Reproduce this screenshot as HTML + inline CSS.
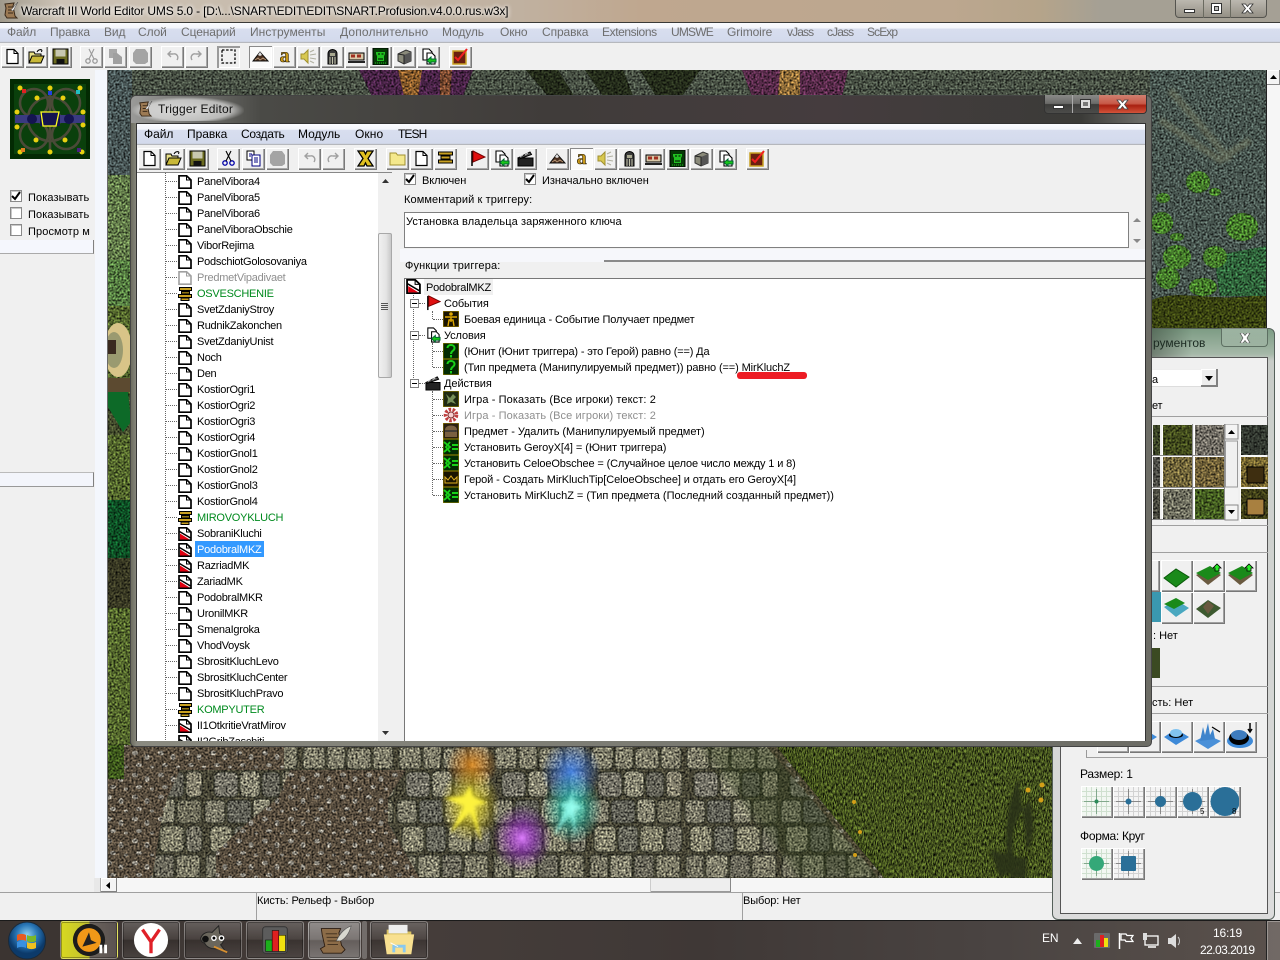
<!DOCTYPE html>
<html lang="ru"><head><meta charset="utf-8"><title>Warcraft III World Editor</title>
<style>
*{box-sizing:border-box}
html,body{margin:0;padding:0;width:1280px;height:960px;overflow:hidden;background:#f0f0f0}
body{position:relative;font:11px/16px "Liberation Sans",sans-serif;letter-spacing:-.2px;color:#000}
.a,.t,.b{position:absolute}
.t{white-space:nowrap;height:16px}
.g{color:#6e6e6e}
.b{width:23px;height:22px;background:#f0f0f0;box-shadow:inset 1px 1px #fff,inset -1px -1px #7a7a7a,inset -2px -2px #a8a8a8}
.b svg{position:absolute;left:3px;top:2px;width:17px;height:17px}
.b.p{background:#fbfbfb;box-shadow:inset 1px 1px #8a8a8a,inset -1px -1px #fff}
.menu{background:linear-gradient(#fbfcff 0,#f3f5fb 25%,#d8deef 30%,#d3daec 92%,#a8a8a8 100%)}
.r{position:relative;height:16px;white-space:nowrap;letter-spacing:-.25px}
.r svg{position:absolute;width:14px;height:14px;top:2px;left:41px}
.r span{position:absolute;left:60px;top:0;height:16px;line-height:18px}
.r:before{content:"";position:absolute;left:29px;width:11px;top:8px;border-top:1px dotted #666}
.gr{color:#008a1e}.dis{color:#8e8e8e}
.sel{background:#3399ff;color:#fff;padding:0 2px;left:58px!important}
.q{position:relative;height:16px;white-space:nowrap}
.q svg{position:absolute;width:16px;height:16px;top:0}
.q span{position:absolute;top:0;height:16px;line-height:18px}
.box{position:absolute;left:6px;top:4px;width:9px;height:9px;border:1px solid #808080;background:#fff}
.box:after{content:"";position:absolute;left:1px;top:3px;width:5px;height:1px;background:#000}
.dl{position:absolute;border-left:1px dotted #666}
.dh{position:absolute;border-top:1px dotted #666}
.cb{position:absolute;width:12px;height:12px;background:#fff;border:1px solid #8a8a8a;box-shadow:inset 1px 1px #c8c8c8}
.pb{position:absolute;width:32px;height:32px;background:#f0f0f0;box-shadow:inset 1px 1px #fff,inset -1px -1px #777,inset -2px -2px #a0a0a0}
.pb svg{position:absolute;left:1px;top:1px;width:29px;height:29px}
.tb{position:absolute;top:921px;height:38px;border-radius:3px;border:1px solid rgba(255,255,255,.28);box-shadow:inset 0 0 0 1px rgba(0,0,0,.3);background:linear-gradient(rgba(255,255,255,.2),rgba(255,255,255,.05) 48%,rgba(0,0,0,.12) 50%,rgba(255,255,255,.06))}
.tb svg{position:absolute;left:0;top:0;width:100%;height:100%}
</style></head><body>

<svg width="0" height="0" style="position:absolute">
<defs>
<filter id="n" x="0" y="0" width="100%" height="100%" color-interpolation-filters="sRGB"><feTurbulence type="fractalNoise" baseFrequency=".5" numOctaves="2" seed="4"/><feColorMatrix type="matrix" values="1.4 0 0 0 -.2 1.4 0 0 0 -.2 1.4 0 0 0 -.2 0 0 0 0 1" result="g"/><feComposite in="SourceGraphic" in2="g" operator="arithmetic" k1="1.9" k2="0" k3="0" k4="0"/></filter>
<filter id="n2" x="0" y="0" width="100%" height="100%" color-interpolation-filters="sRGB"><feTurbulence type="fractalNoise" baseFrequency=".9 .3" numOctaves="2" seed="9"/><feColorMatrix type="matrix" values="1.8 0 0 0 -.4 1.8 0 0 0 -.4 1.8 0 0 0 -.4 0 0 0 0 1" result="g"/><feComposite in="SourceGraphic" in2="g" operator="arithmetic" k1="1.9" k2="0" k3="0" k4="0"/></filter>
<filter id="b2"><feGaussianBlur stdDeviation="1.5"/></filter>
<filter id="b4"><feGaussianBlur stdDeviation="4"/></filter>
<radialGradient id="yl"><stop offset="0" stop-color="#fff65a"/><stop offset=".35" stop-color="#e8d820" stop-opacity=".6"/><stop offset="1" stop-color="#d8c010" stop-opacity="0"/></radialGradient>
<radialGradient id="cy"><stop offset="0" stop-color="#b8fff0"/><stop offset=".35" stop-color="#30e0c8" stop-opacity=".55"/><stop offset="1" stop-color="#20c0b0" stop-opacity="0"/></radialGradient>
<radialGradient id="bl"><stop offset="0" stop-color="#4a90ff" stop-opacity=".85"/><stop offset="1" stop-color="#2060e0" stop-opacity="0"/></radialGradient>
<radialGradient id="pu"><stop offset="0" stop-color="#e080ff"/><stop offset=".4" stop-color="#9a30c8" stop-opacity=".6"/><stop offset="1" stop-color="#7020a0" stop-opacity="0"/></radialGradient>
<radialGradient id="or"><stop offset="0" stop-color="#e89020" stop-opacity=".85"/><stop offset="1" stop-color="#d07010" stop-opacity="0"/></radialGradient>
<radialGradient id="orb" cx=".5" cy=".35"><stop offset="0" stop-color="#8fd0f0"/><stop offset=".55" stop-color="#2a78b8"/><stop offset="1" stop-color="#0c3a6a"/></radialGradient>
<pattern id="st" x="108" y="745" width="96" height="132" patternUnits="userSpaceOnUse">
<rect width="96" height="132" fill="#4a4838"/>
<g fill="#84826e" stroke="#33352a" stroke-width="1">
<rect x="3" y="2" width="22" height="22" rx="4"/><rect x="27" y="0" width="18" height="24" rx="4"/><rect x="47" y="3" width="24" height="21" rx="4"/><rect x="73" y="1" width="20" height="23" rx="4"/>
<rect x="10" y="27" width="24" height="25" rx="5" fill="#78766a"/><rect x="36" y="26" width="20" height="26" rx="5" fill="#8c8a76"/><rect x="58" y="27" width="18" height="25" rx="5" fill="#66655a"/><rect x="78" y="26" width="16" height="26" rx="5" fill="#8a8672"/>
<rect x="1" y="55" width="20" height="23" rx="4" fill="#807e6c"/><rect x="23" y="55" width="24" height="23" rx="4" fill="#64645a"/><rect x="49" y="54" width="18" height="24" rx="4" fill="#8a8874"/><rect x="69" y="55" width="24" height="23" rx="4" fill="#74725f"/>
<rect x="6" y="81" width="22" height="26" rx="5" fill="#8a8872"/><rect x="30" y="81" width="20" height="26" rx="5" fill="#6a6a5e"/><rect x="52" y="81" width="24" height="26" rx="5" fill="#87856f"/><rect x="78" y="81" width="16" height="26" rx="5" fill="#777566"/>
<rect x="2" y="110" width="18" height="24" rx="3" fill="#7a7866"/><rect x="22" y="110" width="22" height="24" rx="3" fill="#888672"/><rect x="46" y="110" width="20" height="24" rx="3" fill="#6e6c5e"/><rect x="68" y="110" width="24" height="24" rx="3" fill="#807e6a"/></g>
</pattern>
<pattern id="wa" x="0" y="70" width="34" height="20" patternUnits="userSpaceOnUse"><rect width="34" height="20" fill="#4c5548"/><path d="M0 9.500h34M0 19.500h34M9 0v10M26 10v10" stroke="#3a423a" stroke-width="1"/></pattern>
<pattern id="grv" x="0" y="0" width="26" height="22" patternUnits="userSpaceOnUse"><rect width="26" height="22" fill="#5a4f40"/><g fill="#8e8a80"><ellipse cx="5" cy="5" rx="3" ry="2.400"/><ellipse cx="17" cy="9" rx="2.500" ry="3"/><ellipse cx="9" cy="17" rx="3" ry="2"/><ellipse cx="22" cy="19" rx="2" ry="1.500"/></g></pattern>

<symbol id="d" viewBox="0 0 14 14"><path d="M1 .8h7.600l4.400 4.200v8.200H1z" fill="#fff" stroke="#000" stroke-width="1.700"/><path d="M8.500 1v4h4" fill="none" stroke="#000"/></symbol>
<symbol id="dg" viewBox="0 0 14 14"><path d="M1 .8h7.600l4.400 4.200v8.200H1z" fill="#fff" stroke="#a0a0a0" stroke-width="1.600"/><path d="M8.500 1v4h4" fill="none" stroke="#a0a0a0"/></symbol>
<symbol id="dr" viewBox="0 0 14 14"><path d="M1 .8h7.600l4.400 4.200v8.200H1z" fill="#fff" stroke="#000" stroke-width="1.700"/><path d="M8.500 1v4h4" fill="none" stroke="#000"/><path d="M2 6.500l9.500 6H2z" fill="#e00010"/><path d="M1.500 4.500l11 6.500" stroke="#000" stroke-width="1.400"/></symbol>
<symbol id="c" viewBox="0 0 14 14"><g fill="#c8a020" stroke="#000" stroke-width="1"><rect x="1.500" y=".5" width="12" height="3"/><rect x="3.500" y="4.500" width="8" height="2.500" fill="#8f7410"/><rect x=".5" y="7.500" width="13" height="3"/><rect x="3" y="11" width="8" height="2.500"/></g></symbol>

<symbol id="new" viewBox="0 0 17 17"><path d="M3 1.500h7l4 4v10H3z" fill="#fff" stroke="#000" stroke-width="1.200"/><path d="M10 1.500v4h4" fill="none" stroke="#000"/></symbol>
<symbol id="open" viewBox="0 0 17 17"><path d="M1 4h5l1 2h6v9H1z" fill="#e8e088" stroke="#000"/><path d="M1 15l3-7h12l-3 7z" fill="#c8b838" stroke="#000"/><path d="M9 4c1-2 3-3 5-2m0 0l-2-.5m2 .5l-.5 2" fill="none" stroke="#000"/></symbol>
<symbol id="save" viewBox="0 0 17 17"><rect x="1" y="1" width="15" height="15" fill="#6a6a20" stroke="#000"/><rect x="3.500" y="1.500" width="10" height="7" fill="#c8c8b0"/><rect x="4.500" y="11" width="8" height="5" fill="#111"/></symbol>
<symbol id="cut" viewBox="0 0 17 17"><g fill="none" stroke="#0000a8" stroke-width="1.300"><circle cx="5" cy="13" r="2.200"/><circle cx="12" cy="13" r="2.200"/></g><path d="M6 11L11 1M11 11L6 1" stroke="#000" stroke-width="1.100"/></symbol>
<symbol id="cutg" viewBox="0 0 17 17"><g fill="none" stroke="#9a9a9a" stroke-width="1.300"><circle cx="5" cy="13" r="2.200"/><circle cx="12" cy="13" r="2.200"/></g><path d="M6 11L11 1M11 11L6 1" stroke="#9a9a9a" stroke-width="1.100"/></symbol>
<symbol id="copy" viewBox="0 0 17 17"><path d="M2 1h7v9H2z" fill="#fff" stroke="#000"/><path d="M7 5h8v11H7z" fill="#fff" stroke="#000080"/><path d="M9 8h4M9 10h4M9 12h4M4 4h3M4 6h2" stroke="#000080"/></symbol>
<symbol id="copyg" viewBox="0 0 17 17"><path d="M2 1h8v9H2z" fill="#a8a8a8"/><path d="M6 5h4l5 4v7H6z" fill="#a0a0a0"/></symbol>
<symbol id="paste" viewBox="0 0 17 17"><path d="M4 1h9l3 4v9l-3 2H4l-3-3V5z" fill="#a4a4a4"/></symbol>
<symbol id="undo" viewBox="0 0 17 17"><path d="M13 12c2-3 0-7-4-6H5M7 3L4 6l3 3" fill="none" stroke="#a0a0a0" stroke-width="1.400"/></symbol>
<symbol id="redo" viewBox="0 0 17 17"><path d="M4 12C2 9 4 5 8 6h4M10 3l3 3-3 3" fill="none" stroke="#a0a0a0" stroke-width="1.400"/></symbol>
<symbol id="selr" viewBox="0 0 17 17"><rect x="2" y="2" width="13" height="13" fill="none" stroke="#000" stroke-width="1.300" stroke-dasharray="2.500 1.600"/></symbol>
<symbol id="terr" viewBox="0 0 17 17"><path d="M1 13L8 4l8 9z" fill="#4a3020" stroke="#111"/><path d="M8 4l-2 3 2 1 2-1z" fill="#e0e0e0"/><path d="M3 12l3-2 2 2 3-2 3 2" stroke="#b09070" fill="none"/></symbol>
<symbol id="au" viewBox="0 0 17 17"><text x="8.500" y="14" text-anchor="middle" font-family="Liberation Serif" font-weight="bold" font-size="20" fill="#c89818" stroke="#221800" stroke-width=".6">a</text></symbol>
<symbol id="snd" viewBox="0 0 17 17"><path d="M1 6h3l4-4v13l-4-4H1z" fill="#d8c850" stroke="#a09030"/><path d="M10 4l4-2M10 7l6-1M10 10l6 1M10 13l4 2" stroke="#b0b0a0"/></symbol>
<symbol id="ent" viewBox="0 0 17 17"><path d="M4 16V6c0-6 9-6 9 0v10z" fill="#3a3a3a" stroke="#000"/><path d="M6 5h5v3H6z" fill="#a8a890"/><path d="M6 9v7M8.500 9v7M11 9v7" stroke="#c0c0a8"/></symbol>
<symbol id="cam" viewBox="0 0 17 17"><rect x="1" y="5" width="15" height="7" fill="#d8c8a8" stroke="#000"/><rect x="3" y="6.500" width="4" height="3" fill="#a03020"/><rect x="9" y="6.500" width="4" height="3" fill="#a03020"/><path d="M0 13h17v2H0z" fill="#222"/></symbol>
<symbol id="fac" viewBox="0 0 17 17"><rect x="1" y="0" width="15" height="17" fill="#053a05" stroke="#000"/><path d="M4 4h9v2l-1 2v5H5V8L4 6z" fill="#20c020"/><path d="M6 6h2M9.500 6h2M6 11h5" stroke="#000"/><path d="M3 15h11" stroke="#20c020" stroke-dasharray="1 1"/></symbol>
<symbol id="cube" viewBox="0 0 17 17"><path d="M2 6l8-4 5 2v9l-7 3-6-3z" fill="#8a8a7a" stroke="#333"/><path d="M8 7l7-3v9l-7 3z" fill="#555"/><path d="M2 6l6 1v9" fill="none" stroke="#222"/></symbol>
<symbol id="darr" viewBox="0 0 17 17"><path d="M3 1h6l3 3v5H9v3H3z" fill="#fff" stroke="#000" stroke-width="1.100"/><path d="M7 5h5l3 3v8H7z" fill="#fff" stroke="#000" stroke-width="1.100"/><path d="M16 11h-5V9l-4 3.500 4 3.500v-2h5z" fill="#18c818" stroke="#063"/></symbol>
<symbol id="chk" viewBox="0 0 17 17"><rect x="1" y="3" width="13" height="13" fill="#6a2010" stroke="#c8a020" stroke-width="1.500"/><path d="M3 9l3 3 9-11" fill="none" stroke="#f02020" stroke-width="2"/></symbol>
<symbol id="xx" viewBox="0 0 17 17"><path d="M1 1h6l1.500 3L10 1h6l-5 7.500L16 16h-6l-1.500-3L7 16H1l5-7.500z" fill="#e0c020" stroke="#000" stroke-width="1.300"/></symbol>
<symbol id="fold" viewBox="0 0 17 17"><path d="M1 3h6l1.500 2H16v10H1z" fill="#f4e88c" stroke="#a09030"/></symbol>
<symbol id="list" viewBox="0 0 17 17"><g fill="#c8a020" stroke="#000"><rect x="1.500" y="2" width="14" height="3"/><rect x="4" y="6" width="9" height="3"/><rect x="1.500" y="10" width="14" height="3"/></g></symbol>
<symbol id="flag" viewBox="0 0 17 17"><path d="M3 1v15" stroke="#000" stroke-width="1.500"/><path d="M4 1l12 6-12 5z" fill="#e01010" stroke="#700"/></symbol>
<symbol id="act" viewBox="0 0 17 17"><path d="M1 8h15v8H1z" fill="#222" stroke="#000"/><path d="M1 8l12-6 1.500 2.500L2 9z" fill="#555" stroke="#000"/><path d="M3 7l3-2M8 5l3-2" stroke="#ccc"/></symbol>
<symbol id="ev" viewBox="0 0 16 16"><rect width="16" height="16" fill="#1a1400" stroke="#b09000"/><circle cx="8" cy="3" r="1.800" fill="#e0a800"/><path d="M2 6h12M8 6v5M5 15l1-6h4l1 6" stroke="#e0a800" stroke-width="1.400" fill="none"/></symbol>
<symbol id="qs" viewBox="0 0 16 16"><rect width="16" height="16" fill="#032b03" stroke="#a08800"/><path d="M4.500 5c0-4 7-4 7 0 0 3-3.500 2.500-3.500 6" fill="none" stroke="#18d018" stroke-width="2"/><rect x="7" y="12" width="2" height="2.500" fill="#18d018"/></symbol>
<symbol id="gm" viewBox="0 0 16 16"><rect width="16" height="16" fill="#1f2a12" stroke="#a08800"/><path d="M3 3l4 4 3-4 3 3-3 3 3 4-5-2-4 2 1-5z" fill="#78905a"/></symbol>
<symbol id="gr" viewBox="0 0 16 16"><circle cx="8" cy="8" r="5.500" fill="#fff" stroke="#c04040" stroke-width="3.600" stroke-dasharray="2.500 1.400"/><circle cx="8" cy="8" r="3" fill="#f8d0d0" stroke="#803030"/></symbol>
<symbol id="ch" viewBox="0 0 16 16"><rect width="16" height="16" fill="#2a2010" stroke="#a08800"/><path d="M2 7c0-6 12-6 12 0v7H2z" fill="#7a6040"/><path d="M2 8h12" stroke="#333" stroke-width="1.500"/></symbol>
<symbol id="sx" viewBox="0 0 16 16"><rect width="16" height="16" fill="#032b03" stroke="#a08800"/><path d="M1 3l6 5-6 5M7 3l-4 5 4 5" stroke="#18d018" stroke-width="1.800" fill="none"/><path d="M9 6h6M9 10h6" stroke="#18d018" stroke-width="2"/></symbol>
<symbol id="hr" viewBox="0 0 16 16"><rect width="16" height="16" fill="#1a1400" stroke="#a08800"/><path d="M2 12V6l3 3 3-4 3 4 3-3v6z" fill="none" stroke="#e0b020"/><path d="M3 12h10" stroke="#e0b020" stroke-dasharray="1 1"/></symbol>

<symbol id="grid" viewBox="0 0 29 29"><rect width="29" height="29" fill="#f4f4f4"/><path d="M4.500 0v29M9.500 0v29M14.500 0v29M19.500 0v29M24.500 0v29M0 4.500h29M0 9.500h29M0 14.500h29M0 19.500h29M0 24.500h29" stroke="#d2d2d2"/><path d="M14.500 2v25M2 14.500h25" stroke="#888"/></symbol>
<symbol id="gridg" viewBox="0 0 29 29"><rect width="29" height="29" fill="#f2f7f2"/><path d="M4.500 0v29M9.500 0v29M14.500 0v29M19.500 0v29M24.500 0v29M0 4.500h29M0 9.500h29M0 14.500h29M0 19.500h29M0 24.500h29" stroke="#cfe0cf"/><path d="M14.500 2v25M2 14.500h25" stroke="#82a88c"/></symbol>
<symbol id="cl" viewBox="0 0 29 29"><path d="M2 17l12-9 13 8-13 10z" fill="#1a8a1a" stroke="#0a5a0a"/></symbol>
</defs>
</svg>

<!-- map -->
<svg class="a" style="left:0;top:0" width="1280" height="960" viewBox="0 0 1280 960">
<g filter="url(#n)">
<rect x="108" y="70" width="1160" height="30" fill="url(#wa)"/>
<rect x="1150" y="70" width="116" height="260" fill="#4a5852"/>
<rect x="108" y="70" width="24" height="110" fill="#4a5858"/>
</g>
<g filter="url(#b2)">
<path d="M1160 120l60 40 30-20M1170 90l60 70" stroke="#8a8a68" stroke-width="7" fill="none" opacity=".35"/>
</g>
<g filter="url(#n)">
<path d="M359 70h114l-10 26H372z" fill="#4a2448"/><path d="M398 70h24l-4 26h-14z" fill="#8c5e2c"/><path d="M440 70h12l-2 26h-10z" fill="#7a4a30"/>
<path d="M742 70h106l-6 26H752z" fill="#5a2c4c"/><path d="M780 70h20v26h-22z" fill="#94703a"/>
<path d="M526 70l22 26h26l-16-26zM585 70l18 26h30l-10-26zM640 70h60l-18 26h-26z" fill="#262e1c"/>
<path d="M1152 300c30-12 60 4 114-6v36h-114z" fill="#3c4612"/>
<path d="M1214 256l52-10v50h-46z" fill="#31663c"/>
<g fill="#477f2c"><ellipse cx="1198" cy="182" rx="12" ry="11"/><ellipse cx="1215" cy="192" rx="6" ry="4"/><ellipse cx="1163" cy="198" rx="7" ry="5"/><ellipse cx="1162" cy="223" rx="11" ry="11"/><ellipse cx="1177" cy="237" rx="7" ry="4"/><ellipse cx="1242" cy="227" rx="16" ry="14"/><ellipse cx="1177" cy="257" rx="14" ry="12"/><ellipse cx="1215" cy="257" rx="12" ry="11"/><ellipse cx="1168" cy="278" rx="12" ry="11"/><ellipse cx="1203" cy="287" rx="14" ry="9"/></g>
</g>
<g filter="url(#n)">
<rect x="108" y="175" width="23" height="95" fill="#657f4c"/>
<rect x="108" y="260" width="23" height="485" fill="#566a2e"/>
<rect x="108" y="260" width="23" height="46" fill="#567e42"/>
<rect x="108" y="395" width="23" height="40" fill="#464f2e"/>
<rect x="108" y="500" width="23" height="58" fill="#0e5226"/>
<rect x="108" y="558" width="23" height="50" fill="#3a3a24"/>
</g>
<ellipse cx="118" cy="350" rx="14" ry="27" fill="#d8c488"/><ellipse cx="114" cy="350" rx="9" ry="18" fill="#9a9a70"/><rect x="108" y="378" width="23" height="14" fill="#5c4a30"/><rect x="108" y="340" width="8" height="14" fill="#3a2a20"/>
<path d="M108 392h20l3 30-8 10-15-25z" fill="#0d6a28"/>

<!-- bottom -->
<g filter="url(#n2)"><rect x="108" y="745" width="950" height="134" fill="#46551f"/></g>
<g filter="url(#n)">
<path d="M108 745H775L885 879H108z" fill="url(#grv)"/>
<path d="M284 745H765L880 879H420L388 823V798L406 770H284zM180 770H290L278 798 247 823 216 852V879H152L161 823 167 798z" fill="url(#st)"/>
<path d="M108 745h16v34h-16z" fill="#3f5a1d"/>
</g>
<path d="M700 745H775L885 879H800z" fill="#2c3a14" opacity=".35" filter="url(#b4)"/>
<g filter="url(#b2)"><path d="M1010 878c-8-40-4-70 8-100 5 30 10 70 8 100zM990 850l40 10-30 18zM1030 800c-18 20-20 40-14 70 16-20 22-40 14-70z" fill="#2a3016" opacity=".9"/></g>
<g fill="#d4a018"><circle cx="1028" cy="790" r="2.500"/><circle cx="1042" cy="785" r="2.500"/><circle cx="1041" cy="800" r="2.500"/><circle cx="855" cy="855" r="2"/><circle cx="854" cy="802" r="2"/><circle cx="860" cy="832" r="2"/></g>
<ellipse cx="472" cy="765" rx="26" ry="24" fill="url(#or)"/>
<ellipse cx="571" cy="772" rx="30" ry="32" fill="url(#bl)"/>
<ellipse cx="522" cy="838" rx="30" ry="34" fill="url(#pu)"/>
<ellipse cx="470" cy="805" rx="30" ry="38" fill="url(#yl)"/>
<path d="M470 785l3 12 14 6-13 3 8 38-12-32-20 22 14-28-20-8 20-2z" fill="#fdf23e" filter="url(#b2)"/>
<ellipse cx="572" cy="808" rx="30" ry="36" fill="url(#cy)"/>
<path d="M572 790l2 14 10 3-10 3 2 26-6-22-16 22 12-28-8-4 11-1z" fill="#90fff0" opacity=".8" filter="url(#b2)"/>
</svg>

<!-- title bar -->
<div class="a" style="left:0;top:0;width:1280px;height:22px;background:linear-gradient(90deg,#a09a8c 0,#cdc3b6 60px,#c0b1a0 520px,#bfa78f 640px,#bca78f 950px,#b5a48a 1040px,#a5a094 1100px,#a5a095 1280px)"></div>
<div class="t" style="left:21px;top:3px;font-size:12px;letter-spacing:-.165px;text-shadow:0 0 5px #fff,0 0 5px #fff">Warcraft III World Editor UMS 5.0 - [D:\...\SNART\EDIT\EDIT\SNART.Profusion.v4.0.0.rus.w3x]</div>
<svg class="a" style="left:2px;top:2px" width="17" height="17" viewBox="0 0 17 17"><path d="M3 2l9-1-1 3 2 10 2 2H5L3 13 4 6z" fill="#9c7a54" stroke="#3a2a1a"/><path d="M6 5h5M6 8h5M6 11h5" stroke="#3a2a1a"/><path d="M16 0L9 8l2 1z" fill="#eee" stroke="#444" stroke-width=".5"/></svg>
<div class="a" style="left:1175px;top:0;width:92px;height:18px;border:1px solid #55544f;border-top:0;border-radius:0 0 4px 4px;background:linear-gradient(rgba(255,255,255,.25),rgba(0,0,0,.1))"></div>
<div class="a" style="left:1203px;top:0;width:1px;height:18px;background:#6a6a60"></div>
<div class="a" style="left:1230px;top:0;width:1px;height:18px;background:#6a6a60"></div>
<div class="a" style="left:1184px;top:9px;width:11px;height:4px;background:#fff;border:1px solid #333"></div>
<div class="a" style="left:1211px;top:3px;width:11px;height:11px;background:#fff;border:1px solid #333"></div><div class="a" style="left:1214px;top:6px;width:5px;height:5px;background:#bbb;border:1px solid #333"></div>
<svg class="a" style="left:1241px;top:3px" width="13" height="11" viewBox="0 0 13 11"><path d="M1 1h3.500L6.500 3.500 8.500 1H12L8.500 5.500 12 10H8.500L6.500 7.500 4.500 10H1L4.500 5.500z" fill="#fff" stroke="#333" stroke-width=".8"/></svg>

<!-- main menu -->
<div class="a menu" style="left:0;top:22px;width:1280px;height:21px;border-top:1px solid #3a3a38"></div>
<div class="a" style="left:0;top:24px;width:1280px;height:16px;font-size:12px;letter-spacing:-.1px">
<span class="t g" style="left:7px">Файл</span><span class="t g" style="left:50px">Правка</span><span class="t g" style="left:104px">Вид</span><span class="t g" style="left:138px">Слой</span><span class="t g" style="left:181px">Сценарий</span><span class="t g" style="left:250px;letter-spacing:.05px">Инструменты</span><span class="t g" style="left:340px;letter-spacing:.15px">Дополнительно</span><span class="t g" style="left:442px">Модуль</span><span class="t g" style="left:500px">Окно</span><span class="t g" style="left:542px">Справка</span><span class="t g" style="left:602px;letter-spacing:-.4px">Extensions</span><span class="t g" style="left:671px;letter-spacing:-.8px">UMSWE</span><span class="t g" style="left:727px">Grimoire</span><span class="t g" style="left:787px;letter-spacing:-.9px">vJass</span><span class="t g" style="left:827px;letter-spacing:-.9px">cJass</span><span class="t g" style="left:867px;letter-spacing:-.9px">ScExp</span>
</div>

<!-- main toolbar -->
<div class="b" style="left:1px;top:46px"><svg><use href="#new"/></svg></div>
<div class="b" style="left:25px;top:46px"><svg><use href="#open"/></svg></div>
<div class="b" style="left:49px;top:46px"><svg><use href="#save"/></svg></div>
<div class="b" style="left:80px;top:46px"><svg><use href="#cutg"/></svg></div>
<div class="b" style="left:104px;top:46px"><svg><use href="#copyg"/></svg></div>
<div class="b" style="left:129px;top:46px"><svg><use href="#paste"/></svg></div>
<div class="b" style="left:161px;top:46px"><svg><use href="#undo"/></svg></div>
<div class="b" style="left:185px;top:46px"><svg><use href="#redo"/></svg></div>
<div class="b" style="left:217px;top:46px;box-shadow:inset 2px 2px #9a9a9a,inset -1px -1px #fff"><svg><use href="#selr"/></svg></div>
<div class="b p" style="left:249px;top:46px"><svg><use href="#terr"/></svg></div>
<div class="b" style="left:273px;top:46px"><svg><use href="#au"/></svg></div>
<div class="b" style="left:297px;top:46px"><svg><use href="#snd"/></svg></div>
<div class="b" style="left:321px;top:46px"><svg><use href="#ent"/></svg></div>
<div class="b" style="left:345px;top:46px"><svg><use href="#cam"/></svg></div>
<div class="b" style="left:369px;top:46px"><svg><use href="#fac"/></svg></div>
<div class="b" style="left:393px;top:46px"><svg><use href="#cube"/></svg></div>
<div class="b" style="left:417px;top:46px"><svg><use href="#darr"/></svg></div>
<div class="b" style="left:449px;top:46px"><svg><use href="#chk"/></svg></div>

<!-- left panel -->
<div class="a" style="left:0;top:70px;width:95px;height:822px;background:#f0f0f0"></div>
<div class="a" style="left:95px;top:70px;width:12px;height:808px;background:#f4f7fd"></div>
<div class="a" style="left:107px;top:70px;width:1px;height:808px;background:#6a6a6a"></div>
<svg class="a" style="left:10px;top:79px" width="80" height="80" viewBox="0 0 80 80">
<rect width="80" height="80" fill="#032a03"/><rect x="4" y="5" width="72" height="70" fill="#0a400c"/>
<g fill="none" stroke="#4a4a38" stroke-width="2.600"><circle cx="24" cy="24" r="14"/><circle cx="56" cy="24" r="14"/><circle cx="24" cy="56" r="14"/><circle cx="56" cy="56" r="14"/><circle cx="40" cy="40" r="22"/><path d="M40 8v64M8 40h64"/></g>
<rect x="5" y="36" width="70" height="8" fill="#3a3a80"/><rect x="30" y="33" width="20" height="14" fill="#141450"/><circle cx="22" cy="40" r="5" fill="#141450"/><circle cx="59" cy="40" r="5" fill="#141450"/>
<path d="M31 33h18l-3 14H33z" fill="none" stroke="#ffff20" stroke-width="1.300"/>
<g fill="#e8d010"><circle cx="10" cy="9" r="2.500"/><circle cx="40" cy="9" r="2.500"/><circle cx="70" cy="9" r="2.500"/><circle cx="27" cy="19" r="2.500"/><circle cx="53" cy="19" r="2.500"/><circle cx="7" cy="33" r="2.500"/><circle cx="73" cy="33" r="2.500"/><circle cx="7" cy="48" r="2.500"/><circle cx="73" cy="46" r="2.500"/><circle cx="26" cy="61" r="2.500"/><circle cx="55" cy="61" r="2.500"/><circle cx="10" cy="73" r="2.500"/><circle cx="40" cy="73" r="2.500"/><circle cx="72" cy="73" r="2.500"/></g>
<rect x="12" y="10" width="4" height="4" fill="#e02020"/><rect x="38" y="12" width="4" height="4" fill="#2040e0"/><rect x="66" y="11" width="4" height="4" fill="#20c0c0"/><rect x="11" y="69" width="4" height="4" fill="#e08020"/><rect x="67" y="69" width="4" height="4" fill="#4a2080"/>
</svg>
<div class="cb" style="left:10px;top:190px"><svg width="10" height="10" viewBox="0 0 10 10" style="position:absolute;left:0;top:0"><path d="M1 5l3 3 5-7" fill="none" stroke="#000" stroke-width="2"/></svg></div>
<div class="cb" style="left:10px;top:207px"></div><div class="cb" style="left:10px;top:224px"></div>
<div class="t" style="left:28px;top:190px;letter-spacing:.1px">Показывать</div>
<div class="t" style="left:28px;top:207px;letter-spacing:.1px">Показывать</div>
<div class="t" style="left:28px;top:224px;width:62px;overflow:hidden;letter-spacing:.1px">Просмотр местности</div>
<div class="a" style="left:0;top:240px;width:94px;height:14px;background:#f5f7fd;border-right:1px solid #808080;border-bottom:1px solid #aaa"></div>
<div class="a" style="left:0;top:472px;width:94px;height:15px;background:#f3f5fb;border-top:1px solid #bbb;border-bottom:1px solid #999;border-right:1px solid #808080"></div>

<!-- right scroll -->
<div class="a" style="left:1266px;top:70px;width:14px;height:822px;background:#f6f6f6;border-left:1px solid #222"></div>
<div class="a" style="left:1267px;top:70px;width:13px;height:15px;background:#f4f4f4;box-shadow:inset -1px -1px #888,inset 1px 1px #fff"></div>
<svg class="a" style="left:1270px;top:75px" width="7" height="4"><path d="M0 4h7L3.500 0z"/></svg>

<!-- bottom scroll -->
<div class="a" style="left:95px;top:878px;width:1185px;height:14px;background:#f6f6f6"></div>
<div class="a" style="left:94px;top:878px;width:7px;height:14px;background:#e8e8e8;border-right:1px solid #aaa"></div>
<div class="a" style="left:101px;top:878px;width:16px;height:14px;background:#f4f4f4;box-shadow:inset -1px -1px #808080,inset 1px 1px #fff"></div>
<svg class="a" style="left:106px;top:882px" width="4" height="7"><path d="M4 0v7L0 3.500z"/></svg>
<div class="a" style="left:650px;top:878px;width:81px;height:14px;background:#eee;box-shadow:inset -1px 0 #888,inset 1px 0 #ccc,inset 0 1px #ddd,inset 0 -1px #999"></div>

<!-- status -->
<div class="a" style="left:0;top:892px;width:1280px;height:28px;background:#f0f0f0;border-top:1px solid #a0a0a0"></div>
<div class="a" style="left:256px;top:892px;width:1px;height:28px;background:#a0a0a0"></div>
<div class="a" style="left:742px;top:892px;width:1px;height:28px;background:#a0a0a0"></div>
<div class="t" style="left:257px;top:893px;letter-spacing:-.06px">Кисть: Рельеф - Выбор</div>
<div class="t" style="left:743px;top:893px;letter-spacing:-.1px">Выбор: Нет</div>

<!-- tool palette -->
<div class="a" style="left:1052px;top:328px;width:223px;height:592px;border:1px solid #55605a;border-radius:6px;background:linear-gradient(#7d9c84 0,#a5b8a8 25px,#c8ccc8 32px,#dcdcdc 100%)"></div>
<div class="a" style="left:1060px;top:357px;width:208px;height:557px;background:#f0f0f0;border:1px solid #555"></div>
<div class="a" style="left:1152px;top:329px;width:40px;height:28px;background:linear-gradient(90deg,rgba(30,40,30,.4),transparent)"></div>
<div class="t" style="left:1153px;top:335px;font-size:12px;letter-spacing:0;color:#1c2a22">рументов</div>
<div class="a" style="left:1221px;top:328px;width:47px;height:19px;border:1px solid #5d6f62;border-top:0;border-radius:0 0 4px 4px;background:linear-gradient(rgba(255,255,255,.25),rgba(255,255,255,.05))"></div>
<svg class="a" style="left:1239px;top:333px" width="12" height="10" viewBox="0 0 12 10"><path d="M1 0h3L6 2.500 8 0h3L8 5l3 5H8L6 7.500 4 10H1l3-5z" fill="#fff" stroke="#444" stroke-width=".6"/></svg>

<div class="a" style="left:1152px;top:369px;width:50px;height:18px;background:#fff;border-top:1px solid #eee;border-bottom:1px solid #ddd"></div>
<div class="t" style="left:1152px;top:372px;font-size:11px">а</div>
<div class="a" style="left:1201px;top:369px;width:17px;height:18px;background:#eee;box-shadow:inset -2px -2px #808080,inset 1px 1px #fff"></div>
<svg class="a" style="left:1205px;top:376px" width="8" height="5"><path d="M0 0h8L4 5z"/></svg>
<div class="t" style="left:1152px;top:398px">ет</div>
<div class="a" style="left:1152px;top:416px;width:116px;height:1px;background:#a0a0a0"></div>
<div class="a" style="left:1152px;top:525px;width:116px;height:1px;background:#a0a0a0"></div>
<div class="a" style="left:1152px;top:552px;width:116px;height:1px;background:#a0a0a0"></div>

<svg class="a" style="left:1152px;top:424px" width="116" height="98" viewBox="1152 424 116 98">
<g filter="url(#n)">
<rect x="1153" y="425" width="7" height="30" fill="#3e4828"/><rect x="1153" y="457" width="7" height="30" fill="#50504a"/><rect x="1153" y="489" width="7" height="30" fill="#4a4a40"/>
<rect x="1163" y="425" width="29" height="30" fill="#444e1e"/><rect x="1195" y="425" width="29" height="30" fill="#757168"/>
<rect x="1163" y="457" width="29" height="30" fill="#75693c"/><rect x="1195" y="457" width="29" height="30" fill="#74643a"/>
<rect x="1163" y="489" width="29" height="30" fill="#727262"/><rect x="1195" y="489" width="29" height="30" fill="#466022"/>
<rect x="1241" y="425" width="27" height="30" fill="#343a32"/><rect x="1241" y="457" width="27" height="30" fill="#7a6a32"/><rect x="1241" y="489" width="27" height="30" fill="#44441a"/>
</g>
<rect x="1247" y="467" width="17" height="16" fill="#3e2e10" stroke="#000"/><rect x="1247" y="499" width="17" height="16" fill="#a88040" stroke="#000"/>
<g stroke="#fff"><path d="M1162.500 424v98M1194.500 424v98M1240.500 424v98M1152 456h72M1152 488h72M1240 456h28M1240 488h28"/></g>
<g stroke="#8c8c8c"><path d="M1152 455.500h72M1152 487.500h72M1152 519.500h72M1192.500 424v96M1224.500 424v96"/></g>
<rect x="1225" y="424" width="13" height="96" fill="#f3f3f3"/>
<rect x="1225" y="424" width="13" height="15" fill="#f4f4f4" stroke="#888"/><path d="M1228 434h7l-3.500-4z"/>
<rect x="1225.500" y="441" width="12" height="46" fill="#f0f0f0" stroke="#999"/>
<rect x="1225" y="505" width="13" height="15" fill="#f4f4f4" stroke="#888"/><path d="M1228 510h7l-3.500 4z"/>
</svg>

<div class="pb" style="left:1129px;top:560px;width:31px"></div>
<div class="pb" style="left:1161px;top:560px"><svg><use href="#cl"/></svg></div>
<div class="pb" style="left:1193px;top:560px"><svg viewBox="0 0 29 29"><path d="M2 14l14-7 11 7-13 10z" fill="#6a5a40"/><path d="M2 12l14-7 11 7-13 7z" fill="#1a8a1a"/><path d="M21 4h4v3h2l-4 4-4-4h2z" fill="#28f028" stroke="#000" stroke-width=".8" transform="rotate(180 23 7)"/></svg></div>
<div class="pb" style="left:1225px;top:560px"><svg viewBox="0 0 29 29"><path d="M2 14l14-7 11 7-13 10z" fill="#6a5a40"/><path d="M2 12l14-7 11 7-13 7z" fill="#1a8a1a"/><path d="M21 4h4v3h2l-4 4-4-4h2z" fill="#28f028" stroke="#000" stroke-width=".8" transform="rotate(180 23 7)"/></svg></div>
<div class="pb" style="left:1161px;top:592px"><svg viewBox="0 0 29 29"><path d="M2 14L14 7l13 8-13 9z" fill="#4aa8c0"/><path d="M2 11L14 5l9 5-11 6z" fill="#1a8a1a"/></svg></div>
<div class="pb" style="left:1193px;top:592px"><svg viewBox="0 0 29 29"><path d="M2 16l12-9 13 8-13 10z" fill="#3d5a30"/><path d="M9 14l5-6 6 5-6 8z" fill="#6a5a40"/></svg></div>
<div class="a" style="left:1152px;top:592px;width:9px;height:30px;background:#3a98b0"></div>
<div class="t" style="left:1153px;top:628px;letter-spacing:0">: Нет</div>
<div class="a" style="left:1150px;top:648px;width:10px;height:30px;background:#3b4a22"></div>
<div class="a" style="left:1152px;top:686px;width:116px;height:1px;background:#a0a0a0"></div>
<div class="t" style="left:1152px;top:695px;letter-spacing:0">сть: Нет</div>
<div class="a" style="left:1152px;top:713px;width:116px;height:1px;background:#a0a0a0"></div>
<div class="pb" style="left:1097px;top:721px"><svg viewBox="0 0 29 29"><path d="M2 15l12-8 13 8-13 8z" fill="#3e8ad8"/></svg></div>
<div class="pb" style="left:1129px;top:721px"><svg viewBox="0 0 29 29"><path d="M2 15l12-8 13 8-13 8z" fill="#3e8ad8"/></svg></div>
<div class="pb" style="left:1161px;top:721px"><svg viewBox="0 0 29 29"><path d="M2 15l12-8 13 8-13 8z" fill="#3e8ad8"/><ellipse cx="14" cy="13" rx="7" ry="3" fill="#000"/><ellipse cx="14" cy="11" rx="6" ry="4" fill="#82c4f0"/></svg></div>
<div class="pb" style="left:1193px;top:721px"><svg viewBox="0 0 29 29"><path d="M1 19l12-6 14 6-13 8z" fill="#4a90d8"/><path d="M6 19l3-14 2 8 3-12 2 12 3-6 2 10z" fill="#3e84cc"/><path d="M18 5l8 5" stroke="#000" stroke-width="1.300"/></svg></div>
<div class="pb" style="left:1225px;top:721px"><svg viewBox="0 0 29 29"><ellipse cx="14" cy="19" rx="13" ry="7" fill="#3e8ad8"/><ellipse cx="13" cy="16" rx="10" ry="7" fill="#000"/><ellipse cx="13" cy="13" rx="8" ry="5" fill="#3e7cbe"/><path d="M24 1v8m-2-2l2 3 2-3" stroke="#000" stroke-width="1.500" fill="none"/></svg></div>
<div class="a" style="left:1086px;top:750px;width:182px;height:8px;border-left:1px solid #999;border-bottom:1px solid #a0a0a0"></div>
<div class="t" style="left:1080px;top:766px;font-size:12px;letter-spacing:-.2px">Размер: 1</div>
<div class="pb" style="left:1081px;top:786px"><svg><use href="#gridg"/><circle cx="14.500" cy="14.500" r="2" fill="#2d8a5a"/></svg></div>
<div class="pb" style="left:1113px;top:786px"><svg><use href="#grid"/><circle cx="14.500" cy="14.500" r="3" fill="#2a6f98"/></svg></div>
<div class="pb" style="left:1145px;top:786px"><svg><use href="#grid"/><circle cx="14.500" cy="14.500" r="5.500" fill="#2a6f98"/></svg></div>
<div class="pb" style="left:1177px;top:786px"><svg><use href="#grid"/><circle cx="14.500" cy="14.500" r="9.500" fill="#2a6f98"/><text x="22" y="27" font-family="Liberation Sans" font-size="8">5</text></svg></div>
<div class="pb" style="left:1209px;top:786px"><svg><use href="#grid"/><circle cx="15" cy="14.500" r="14.500" fill="#2a6f98"/><text x="22" y="27" font-family="Liberation Sans" font-size="8" fill="#000">8</text></svg></div>
<div class="t" style="left:1080px;top:828px;font-size:12px;letter-spacing:-.3px">Форма: Круг</div>
<div class="pb" style="left:1081px;top:848px"><svg><use href="#gridg"/><circle cx="14.500" cy="14.500" r="7.500" fill="#34a878"/></svg></div>
<div class="pb" style="left:1113px;top:848px"><svg><use href="#grid"/><rect x="7" y="7" width="15" height="15" rx="1" fill="#2a6f98"/></svg></div>

<!-- trigger editor -->
<div class="a" style="left:130px;top:95px;width:1022px;height:652px;border:1px solid #444;border-radius:6px 6px 5px 5px;background:linear-gradient(90deg,#6d6d60 0,#8a8a80 6px,#6c6c65 100%)"></div>
<div class="a" style="left:131px;top:96px;width:1020px;height:27px;border-radius:5px 5px 0 0;background:linear-gradient(90deg,#9a9a98 0,#4a4a46 130px,#403c3a 420px,#453c3e 700px,#3b3b38 950px,#6c6c68 1010px)"></div>
<div class="a" style="left:132px;top:97px;width:112px;height:24px;background:radial-gradient(ellipse at 50% 55%,rgba(255,255,255,.7) 0,rgba(255,255,255,.55) 55%,rgba(255,255,255,0) 72%)"></div>
<div class="t" style="left:158px;top:101px;font-size:12px;letter-spacing:.2px;color:#111">Trigger Editor</div>
<svg class="a" style="left:137px;top:101px" width="16" height="16" viewBox="0 0 17 17"><path d="M3 2l9-1-1 3 2 10 2 2H5L3 13 4 6z" fill="#9c7a54" stroke="#3a2a1a"/><path d="M6 5h5M6 8h5M6 11h5" stroke="#3a2a1a"/><path d="M16 0L9 8l2 1z" fill="#eee" stroke="#444" stroke-width=".5"/></svg>
<div class="a" style="left:1044px;top:95px;width:103px;height:19px;border:1px solid #333;border-top:0;border-radius:0 0 4px 4px;overflow:hidden;background:linear-gradient(#8a8a88,#6a6a68 48%,#3c3c3a 52%,#4c4c4a)"><div class="a" style="left:27px;top:0;width:1px;height:19px;background:#aaa"></div><div class="a" style="left:54px;top:0;width:47px;height:19px;background:linear-gradient(#d08070,#c85a48 45%,#a82010 55%,#d85a40)"></div></div>
<div class="a" style="left:1053px;top:105px;width:11px;height:4px;background:#fff;border:1px solid #333"></div>
<div class="a" style="left:1080px;top:99px;width:11px;height:10px;background:#ddd;border:1px solid #333"></div><div class="a" style="left:1083px;top:102px;width:5px;height:4px;background:#777"></div>
<svg class="a" style="left:1116px;top:99px" width="13" height="11" viewBox="0 0 13 11"><path d="M1 1h3.500L6.500 3.500 8.500 1H12L8.500 5.500 12 10H8.500L6.500 7.500 4.500 10H1L4.500 5.500z" fill="#fff" stroke="#444" stroke-width=".8"/></svg>

<div class="a" style="left:136px;top:123px;width:1010px;height:618px;background:#f0f0f0;border:1px solid #333;border-bottom:0"></div>
<div class="a menu" style="left:137px;top:124px;width:1008px;height:21px"></div>
<div class="a" style="left:137px;top:126px;width:400px;height:16px;font-size:12px;letter-spacing:-.05px">
<span class="t" style="left:7px">Файл</span><span class="t" style="left:50px">Правка</span><span class="t" style="left:104px;letter-spacing:-.3px">Создать</span><span class="t" style="left:161px">Модуль</span><span class="t" style="left:218px;letter-spacing:.1px">Окно</span><span class="t" style="left:261px;letter-spacing:-.9px">TESH</span>
</div>

<div class="b" style="left:138px;top:148px"><svg><use href="#new"/></svg></div>
<div class="b" style="left:162px;top:148px"><svg><use href="#open"/></svg></div>
<div class="b" style="left:186px;top:148px"><svg><use href="#save"/></svg></div>
<div class="b" style="left:217px;top:148px"><svg><use href="#cut"/></svg></div>
<div class="b" style="left:242px;top:148px"><svg><use href="#copy"/></svg></div>
<div class="b" style="left:266px;top:148px"><svg><use href="#paste"/></svg></div>
<div class="b" style="left:298px;top:148px"><svg><use href="#undo"/></svg></div>
<div class="b" style="left:322px;top:148px"><svg><use href="#redo"/></svg></div>
<div class="b" style="left:354px;top:148px"><svg><use href="#xx"/></svg></div>
<div class="b" style="left:386px;top:148px"><svg><use href="#fold"/></svg></div>
<div class="b" style="left:410px;top:148px"><svg><use href="#new"/></svg></div>
<div class="b" style="left:434px;top:148px"><svg><use href="#list"/></svg></div>
<div class="b" style="left:466px;top:148px"><svg><use href="#flag"/></svg></div>
<div class="b" style="left:490px;top:148px"><svg><use href="#darr"/></svg></div>
<div class="b" style="left:514px;top:148px"><svg><use href="#act"/></svg></div>
<div class="b" style="left:546px;top:148px"><svg><use href="#terr"/></svg></div>
<div class="b p" style="left:570px;top:148px"><svg><use href="#au"/></svg></div>
<div class="b" style="left:594px;top:148px"><svg><use href="#snd"/></svg></div>
<div class="b" style="left:618px;top:148px"><svg><use href="#ent"/></svg></div>
<div class="b" style="left:642px;top:148px"><svg><use href="#cam"/></svg></div>
<div class="b" style="left:666px;top:148px"><svg><use href="#fac"/></svg></div>
<div class="b" style="left:690px;top:148px"><svg><use href="#cube"/></svg></div>
<div class="b" style="left:714px;top:148px"><svg><use href="#darr"/></svg></div>
<div class="b" style="left:746px;top:148px"><svg><use href="#chk"/></svg></div>

<!-- trigger tree -->
<div class="a" style="left:137px;top:172px;width:255px;height:569px;background:#fff;border-top:1px solid #888;overflow:hidden">
<div class="dl" style="left:28px;top:0;height:569px"></div>
<div class="r"><svg><use href="#d"/></svg><span>PanelVibora4</span></div>
<div class="r"><svg><use href="#d"/></svg><span>PanelVibora5</span></div>
<div class="r"><svg><use href="#d"/></svg><span>PanelVibora6</span></div>
<div class="r"><svg><use href="#d"/></svg><span>PanelViboraObschie</span></div>
<div class="r"><svg><use href="#d"/></svg><span>ViborRejima</span></div>
<div class="r"><svg><use href="#d"/></svg><span>PodschiotGolosovaniya</span></div>
<div class="r"><svg><use href="#dg"/></svg><span class="dis">PredmetVipadivaet</span></div>
<div class="r"><svg><use href="#c"/></svg><span class="gr">OSVESCHENIE</span></div>
<div class="r"><svg><use href="#d"/></svg><span>SvetZdaniyStroy</span></div>
<div class="r"><svg><use href="#d"/></svg><span>RudnikZakonchen</span></div>
<div class="r"><svg><use href="#d"/></svg><span>SvetZdaniyUnist</span></div>
<div class="r"><svg><use href="#d"/></svg><span>Noch</span></div>
<div class="r"><svg><use href="#d"/></svg><span>Den</span></div>
<div class="r"><svg><use href="#d"/></svg><span>KostiorOgri1</span></div>
<div class="r"><svg><use href="#d"/></svg><span>KostiorOgri2</span></div>
<div class="r"><svg><use href="#d"/></svg><span>KostiorOgri3</span></div>
<div class="r"><svg><use href="#d"/></svg><span>KostiorOgri4</span></div>
<div class="r"><svg><use href="#d"/></svg><span>KostiorGnol1</span></div>
<div class="r"><svg><use href="#d"/></svg><span>KostiorGnol2</span></div>
<div class="r"><svg><use href="#d"/></svg><span>KostiorGnol3</span></div>
<div class="r"><svg><use href="#d"/></svg><span>KostiorGnol4</span></div>
<div class="r"><svg><use href="#c"/></svg><span class="gr">MIROVOYKLUCH</span></div>
<div class="r"><svg><use href="#dr"/></svg><span>SobraniKluchi</span></div>
<div class="r"><svg><use href="#dr"/></svg><span class="sel">PodobralMKZ</span></div>
<div class="r"><svg><use href="#dr"/></svg><span>RazriadMK</span></div>
<div class="r"><svg><use href="#dr"/></svg><span>ZariadMK</span></div>
<div class="r"><svg><use href="#d"/></svg><span>PodobralMKR</span></div>
<div class="r"><svg><use href="#d"/></svg><span>UronilMKR</span></div>
<div class="r"><svg><use href="#d"/></svg><span>SmenaIgroka</span></div>
<div class="r"><svg><use href="#d"/></svg><span>VhodVoysk</span></div>
<div class="r"><svg><use href="#d"/></svg><span>SbrositKluchLevo</span></div>
<div class="r"><svg><use href="#d"/></svg><span>SbrositKluchCenter</span></div>
<div class="r"><svg><use href="#d"/></svg><span>SbrositKluchPravo</span></div>
<div class="r"><svg><use href="#c"/></svg><span class="gr">KOMPYUTER</span></div>
<div class="r"><svg><use href="#dr"/></svg><span>II1OtkritieVratMirov</span></div>
<div class="r"><svg><use href="#dr"/></svg><span>II2GribZaschiti</span></div>
</div>
<div class="a" style="left:378px;top:173px;width:14px;height:568px;background:#f0f0f0"></div>
<svg class="a" style="left:382px;top:179px" width="7" height="4"><path d="M0 4h7L3.500 0z" fill="#333"/></svg>
<div class="a" style="left:378px;top:233px;width:14px;height:145px;background:linear-gradient(90deg,#f0f0f0,#e4e4e4 60%,#c8c8c8);border:1px solid #a8a8a8;border-radius:2px"></div>
<div class="a" style="left:381px;top:303px;width:7px;height:8px;background:repeating-linear-gradient(#555 0,#555 1px,transparent 1px,transparent 2px)"></div>
<svg class="a" style="left:382px;top:731px" width="7" height="4"><path d="M0 0h7L3.500 4z" fill="#333"/></svg>

<!-- right side -->
<div class="cb" style="left:404px;top:173px"><svg width="10" height="10" viewBox="0 0 10 10" style="position:absolute;left:0;top:0"><path d="M1 5l3 3 5-7" fill="none" stroke="#000" stroke-width="2"/></svg></div>
<div class="t" style="left:422px;top:173px;letter-spacing:-.05px">Включен</div>
<div class="cb" style="left:524px;top:173px"><svg width="10" height="10" viewBox="0 0 10 10" style="position:absolute;left:0;top:0"><path d="M1 5l3 3 5-7" fill="none" stroke="#000" stroke-width="2"/></svg></div>
<div class="t" style="left:542px;top:173px;letter-spacing:-.03px">Изначально включен</div>
<div class="t" style="left:404px;top:192px;letter-spacing:.1px">Комментарий к триггеру:</div>
<div class="a" style="left:404px;top:212px;width:725px;height:36px;background:#fff;border:1px solid #808080"></div>
<div class="t" style="left:406px;top:214px;letter-spacing:.1px">Установка владельца заряженного ключа</div>
<div class="a" style="left:1129px;top:212px;width:15px;height:36px;background:#f0f0f0"></div>
<svg class="a" style="left:1133px;top:218px" width="8" height="4"><path d="M0 4h8L4 0z" fill="#888"/></svg>
<svg class="a" style="left:1133px;top:239px" width="8" height="4"><path d="M0 0h8L4 4z" fill="#888"/></svg>
<div class="a" style="left:400px;top:249px;width:745px;height:11px;background:#f6f7fb"></div>
<div class="a" style="left:604px;top:260px;width:541px;height:2px;background:#8a8a8a"></div>
<div class="a" style="left:400px;top:260px;width:204px;height:2px;background:#f6f7fb"></div>
<div class="t" style="left:405px;top:258px;letter-spacing:.15px">Функции триггера:</div>
<div class="a" style="left:404px;top:278px;width:741px;height:463px;background:#fff;border-top:1px solid #777;border-left:1px solid #777"></div>

<div class="a" style="left:404px;top:279px;width:740px;height:240px">
<div class="dl" style="left:9px;top:13px;height:96px"></div>
<div class="dl" style="left:28px;top:32px;height:8px"></div>
<div class="dl" style="left:28px;top:64px;height:24px"></div>
<div class="dl" style="left:28px;top:112px;height:104px"></div>
<div class="q"><svg style="left:2px;width:15px;height:15px;top:0"><use href="#dr"/></svg><span style="left:20px;padding:0 2px;background:#f0f0f0">PodobralMKZ</span></div>
<div class="q"><div class="box"></div><div class="dh" style="left:15px;top:8px;width:6px"></div><svg style="left:21px"><use href="#flag"/></svg><span style="left:40px;letter-spacing:-.1px">События</span></div>
<div class="q"><div class="dh" style="left:29px;top:8px;width:10px"></div><svg style="left:39px"><use href="#ev"/></svg><span style="left:60px;letter-spacing:-.13px">Боевая единица - Событие Получает предмет</span></div>
<div class="q"><div class="box"></div><div class="dh" style="left:15px;top:8px;width:6px"></div><svg style="left:21px"><use href="#darr"/></svg><span style="left:40px;letter-spacing:-.1px">Условия</span></div>
<div class="q"><div class="dh" style="left:29px;top:8px;width:10px"></div><svg style="left:39px"><use href="#qs"/></svg><span style="left:60px;letter-spacing:-.16px">(Юнит (Юнит триггера) - это Герой) равно (==) Да</span></div>
<div class="q"><div class="dh" style="left:29px;top:8px;width:10px"></div><svg style="left:39px"><use href="#qs"/></svg><span style="left:60px;letter-spacing:-.12px">(Тип предмета (Манипулируемый предмет)) равно (==) MirKluchZ</span></div>
<div class="q"><div class="box"></div><div class="dh" style="left:15px;top:8px;width:6px"></div><svg style="left:21px"><use href="#act"/></svg><span style="left:40px;letter-spacing:-.05px">Действия</span></div>
<div class="q"><div class="dh" style="left:29px;top:8px;width:10px"></div><svg style="left:39px"><use href="#gm"/></svg><span style="left:60px;letter-spacing:.1px">Игра - Показать (Все игроки) текст: 2</span></div>
<div class="q"><div class="dh" style="left:29px;top:8px;width:10px"></div><svg style="left:39px"><use href="#gr"/></svg><span style="left:60px;letter-spacing:.1px;color:#8e8e8e">Игра - Показать (Все игроки) текст: 2</span></div>
<div class="q"><div class="dh" style="left:29px;top:8px;width:10px"></div><svg style="left:39px"><use href="#ch"/></svg><span style="left:60px;letter-spacing:-.06px">Предмет - Удалить (Манипулируемый предмет)</span></div>
<div class="q"><div class="dh" style="left:29px;top:8px;width:10px"></div><svg style="left:39px"><use href="#sx"/></svg><span style="left:60px;letter-spacing:-.07px">Установить GeroyX[4] = (Юнит триггера)</span></div>
<div class="q"><div class="dh" style="left:29px;top:8px;width:10px"></div><svg style="left:39px"><use href="#sx"/></svg><span style="left:60px;letter-spacing:-.135px">Установить CeloeObschee = (Случайное целое число между 1 и 8)</span></div>
<div class="q"><div class="dh" style="left:29px;top:8px;width:10px"></div><svg style="left:39px"><use href="#hr"/></svg><span style="left:60px;letter-spacing:-.1px">Герой - Создать MirKluchTip[CeloeObschee] и отдать его GeroyX[4]</span></div>
<div class="q"><div class="dh" style="left:29px;top:8px;width:10px"></div><svg style="left:39px"><use href="#sx"/></svg><span style="left:60px;letter-spacing:-.02px">Установить MirKluchZ = (Тип предмета (Последний созданный предмет))</span></div>
</div>
<div class="a" style="left:737px;top:372px;width:70px;height:7px;background:#ed1c24;border-radius:3px"></div>

<!-- taskbar -->
<div class="a" style="left:0;top:920px;width:1280px;height:40px;background:linear-gradient(90deg,#3b3431 0,#453d3a 430px,#3f3836 700px,#4a4442 1000px,#5a514c 1280px);border-top:1px solid #1a1a1a"></div>
<svg class="a" style="left:7px;top:921px" width="40" height="39" viewBox="0 0 40 39"><circle cx="20" cy="19.500" r="18.500" fill="url(#orb)" stroke="#1a2a3a"/><path d="M10 14c3-1.500 6-1.500 9 0v6c-3-1.500-6-1.500-9 0z" fill="#e85a20"/><path d="M20 14c3 1.500 6 1.500 9 0v6c-3 1.500-6 1.500-9 0z" fill="#7ab828"/><path d="M10 21c3-1.500 6-1.500 9 0v6c-3-1.500-6-1.500-9 0z" fill="#3a90e0"/><path d="M20 21c3 1.500 6 1.500 9 0v6c-3 1.500-6 1.500-9 0z" fill="#f0c020"/></svg>
<div class="tb" style="left:60px;width:58px;background:linear-gradient(90deg,#d8d820 0,#c0c030 50%,#6a625c 52%,#5a5250)"><svg viewBox="0 0 58 38"><circle cx="29" cy="19" r="17" fill="#1c1c1c"/><circle cx="29" cy="19" r="12.500" fill="#f09818"/><path d="M22 26l7-15 2 8 6 3z" fill="#222"/><rect x="40" y="24" width="3" height="9" fill="#fff"/><rect x="45" y="24" width="3" height="9" fill="#fff"/></svg></div>
<div class="tb" style="left:122px;width:58px"><svg viewBox="0 0 58 38"><circle cx="29" cy="19" r="18" fill="#fff"/><path d="M20 8l9 13 9-13M29 21v12" fill="none" stroke="#e02028" stroke-width="3.500"/></svg></div>
<div class="tb" style="left:184px;width:58px"><svg viewBox="0 0 58 38"><path d="M16 17c2-6 8-7 12-6l7-7 1 8c5 3 5 10 1 12l6 8-9-4c-6 1-12-1-14-6-2 0-4-2-4-5z" fill="#6a665c" stroke="#222"/><circle cx="21" cy="18" r="3.500" fill="#111"/><circle cx="30" cy="17" r="3" fill="#fff"/><circle cx="30" cy="17" r="1.500" fill="#000"/><circle cx="38" cy="17" r="3" fill="#fff"/><circle cx="38" cy="17" r="1.500" fill="#000"/><path d="M30 26l14 6" stroke="#d89030" stroke-width="2"/></svg></div>
<div class="tb" style="left:246px;width:58px"><svg viewBox="0 0 58 38"><rect x="16" y="5" width="26" height="28" rx="3" fill="#5c5c5c" stroke="#333"/><rect x="19" y="19" width="7" height="12" fill="#1cb01c" stroke="#000" stroke-width=".5"/><rect x="26" y="9" width="7" height="22" fill="#e02020" stroke="#000" stroke-width=".5"/><rect x="33" y="14" width="7" height="17" fill="#f0e010" stroke="#000" stroke-width=".5"/></svg></div>
<div class="tb" style="left:308px;width:53px;background:linear-gradient(rgba(255,255,255,.42),rgba(255,255,255,.3) 48%,rgba(255,255,255,.18) 52%,rgba(255,255,255,.3))"><svg viewBox="0 0 58 38"><path d="M14 6h22l-2 5 3 14 4 5-4 4H16l-3-5 5-3-3-13z" fill="#8c6c48" stroke="#2c1c10"/><path d="M19 12h13M20 16h13M21 20h13M21 24h12" stroke="#3c2c1c"/><path d="M48 3c-6 2-12 7-17 17l5 0c6-3 10-10 12-17z" fill="#d8d8d0" stroke="#555" stroke-width=".7"/></svg></div>
<div class="a" style="left:362px;top:921px;width:5px;height:38px;background:rgba(255,255,255,.25);border-radius:2px"></div>
<div class="tb" style="left:370px;width:58px"><svg viewBox="0 0 58 38"><path d="M16 8h10l2 2h14v20H16z" fill="#d8c060"/><path d="M18 3h20v9H18z" fill="#eee"/><path d="M13 13h32l-3 21H16z" fill="#f8e090"/><path d="M22 32v-8h14v8h-3v-5h-8v5z" fill="#88c8f0"/><path d="M20 22l8 4" stroke="#fff"/></svg></div>

<div class="t" style="left:1042px;top:930px;font-size:12px;letter-spacing:-.1px;color:#fff">EN</div>
<svg class="a" style="left:1073px;top:938px" width="9" height="6"><path d="M0 6h9L4.500 0z" fill="#eee"/></svg>
<svg class="a" style="left:1094px;top:933px" width="16" height="15" viewBox="0 0 16 15"><rect width="16" height="15" rx="1" fill="#6a6a6a"/><rect x="2" y="7" width="4" height="7" fill="#1cb01c"/><rect x="6" y="2" width="4" height="12" fill="#e02020"/><rect x="10" y="5" width="4" height="9" fill="#f0e010"/></svg>
<svg class="a" style="left:1118px;top:933px" width="16" height="16" viewBox="0 0 16 16"><path d="M1.500 0v16" stroke="#fff" stroke-width="1.500"/><path d="M3 1h5l1 1.500h6l-2 3 2 3H8L7 7H3z" fill="none" stroke="#fff" stroke-width="1.300"/></svg>
<svg class="a" style="left:1143px;top:933px" width="16" height="16" viewBox="0 0 16 16"><rect x="2" y="3" width="13" height="9" fill="none" stroke="#fff" stroke-width="1.300"/><rect x="0" y="0" width="4" height="7" fill="#ddd"/><path d="M5 14h8" stroke="#fff" stroke-width="1.500"/></svg>
<svg class="a" style="left:1168px;top:933px" width="14" height="16" viewBox="0 0 14 16"><path d="M0 5h3l5-4v14l-5-4H0z" fill="#ddd"/><path d="M10 4c2 2 2 6 0 8" fill="none" stroke="#ccc"/></svg>
<div class="t" style="left:1213px;top:925px;font-size:12px;letter-spacing:-.2px;color:#fff">16:19</div>
<div class="t" style="left:1200px;top:942px;font-size:12px;letter-spacing:-.55px;color:#fff">22.03.2019</div>
<div class="a" style="left:1266px;top:921px;width:14px;height:39px;background:rgba(255,255,255,.14);border-left:1px solid #222;box-shadow:inset 1px 1px rgba(255,255,255,.3)"></div>
</body></html>
